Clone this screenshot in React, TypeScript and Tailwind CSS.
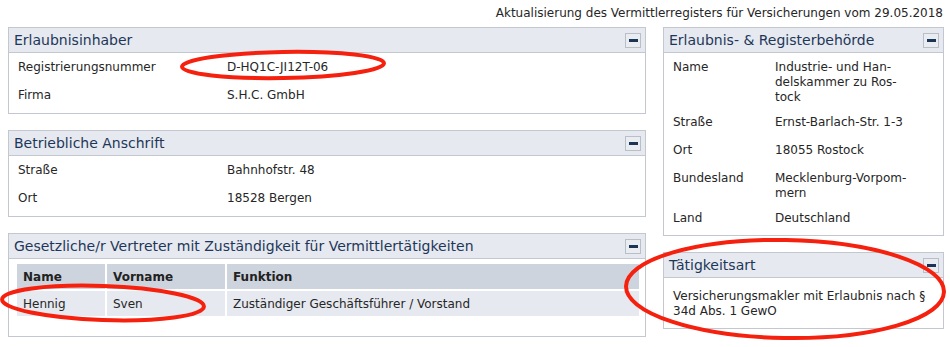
import React from "react";

function Minus() {
  return (
    <div className="flex h-[15px] w-[16px] items-center justify-center border border-[#b9bec7] bg-[#e9ecf1]">
      <div className="h-[3px] w-[9px] bg-[#1b3557]" />
    </div>
  );
}

function Panel({ title, children, bodyClass }: { title: string; children: React.ReactNode; bodyClass?: string }) {
  return (
    <div className="border border-[#c3c8d0] bg-white">
      <div className="flex h-[25px] items-center justify-between border-b border-[#c3c8d0] bg-[#e6e9f0] pl-[5px] pr-[4px]">
        <span className="text-[14px] text-[#1e3758]">{title}</span>
        <Minus />
      </div>
      <div className={bodyClass}>{children}</div>
    </div>
  );
}

function Row({ label, value, cols }: { label: string; value: React.ReactNode; cols: string }) {
  return (
    <div className={`grid ${cols} min-h-[28px] pt-[5px] pb-[5px] leading-[15px]`}>
      <div>{label}</div>
      <div>{value}</div>
    </div>
  );
}

export default function App() {
  const left = "grid-cols-[209px_1fr]";
  const right = "grid-cols-[102px_1fr]";
  return (
    <div
      className="relative h-[347px] w-[950px] overflow-hidden bg-white pl-[8px] pr-[6px] text-[12px] text-[#262626]"
      style={{ fontFamily: '"DejaVu Sans", Verdana, sans-serif' }}
    >
      <div className="flex h-[27px] items-center justify-end pr-[1px] pb-[1px]">
        Aktualisierung des Vermittlerregisters für Versicherungen vom 29.05.2018
      </div>
      <div className="grid grid-cols-[638px_1fr] gap-[17px]">
        <div className="flex flex-col gap-[16px]">
          <Panel title="Erlaubnisinhaber" bodyClass="px-[9px] pt-[2px] pb-[2px]">
            <Row label="Registrierungsnummer" value="D-HQ1C-JI12T-06" cols={left} />
            <Row label="Firma" value="S.H.C. GmbH" cols={left} />
          </Panel>
          <Panel title="Betriebliche Anschrift" bodyClass="px-[9px] pt-[2px] pb-[2px]">
            <Row label="Straße" value="Bahnhofstr. 48" cols={left} />
            <Row label="Ort" value="18528 Bergen" cols={left} />
          </Panel>
          <Panel title="Gesetzliche/r Vertreter mit Zuständigkeit für Vermittlertätigkeiten" bodyClass="pl-[8px] pr-[6px] pt-[5px] pb-[20px]">
            <table className="w-full border-separate border-spacing-0">
              <thead>
                <tr className="bg-[#cdd4dd] font-bold text-[#222]">
                  <th className="h-[25px] w-[88px] px-[6px] text-left">Name</th>
                  <th className="h-[25px] w-[120px] border-l-2 border-white px-[6px] text-left">Vorname</th>
                  <th className="h-[25px] border-l-2 border-white px-[6px] text-left">Funktion</th>
                </tr>
              </thead>
              <tbody>
                <tr className="bg-[#e6e9f0]">
                  <td className="h-[27px] border-t-2 border-white px-[6px]">Hennig</td>
                  <td className="h-[27px] border-l-2 border-t-2 border-white px-[6px]">Sven</td>
                  <td className="h-[27px] border-l-2 border-t-2 border-white px-[6px]">Zuständiger Geschäftsführer / Vorstand</td>
                </tr>
              </tbody>
            </table>
          </Panel>
        </div>
        <div className="flex flex-col gap-[16px]">
          <Panel title="Erlaubnis- & Registerbehörde" bodyClass="px-[9px] pt-[2px] pb-[1px]">
            <Row
              label="Name"
              value={<>Industrie- und Han-<br />delskammer zu Ros-<br />tock</>}
              cols={right}
            />
            <Row label="Straße" value="Ernst-Barlach-Str. 1-3" cols={right} />
            <Row label="Ort" value="18055 Rostock" cols={right} />
            <Row label="Bundesland" value={<>Mecklenburg-Vorpom-<br />mern</>} cols={right} />
            <Row label="Land" value="Deutschland" cols={right} />
          </Panel>
          <Panel title="Tätigkeitsart" bodyClass="px-[9px] pt-[11px] pb-[9px] leading-[15px]">
            Versicherungsmakler mit Erlaubnis nach § 34d Abs. 1 GewO
          </Panel>
        </div>
      </div>
      <svg className="pointer-events-none absolute left-0 top-0" width="950" height="347">
        <g fill="none" stroke="#f5200d" strokeWidth="4">
          <ellipse cx="283" cy="65" rx="101" ry="13" transform="rotate(-1 283 65)" />
          <ellipse cx="103" cy="303" rx="101" ry="17" transform="rotate(2 103 303)" />
          <ellipse cx="785" cy="289" rx="159" ry="49" transform="rotate(1 785 289)" />
        </g>
      </svg>
    </div>
  );
}
